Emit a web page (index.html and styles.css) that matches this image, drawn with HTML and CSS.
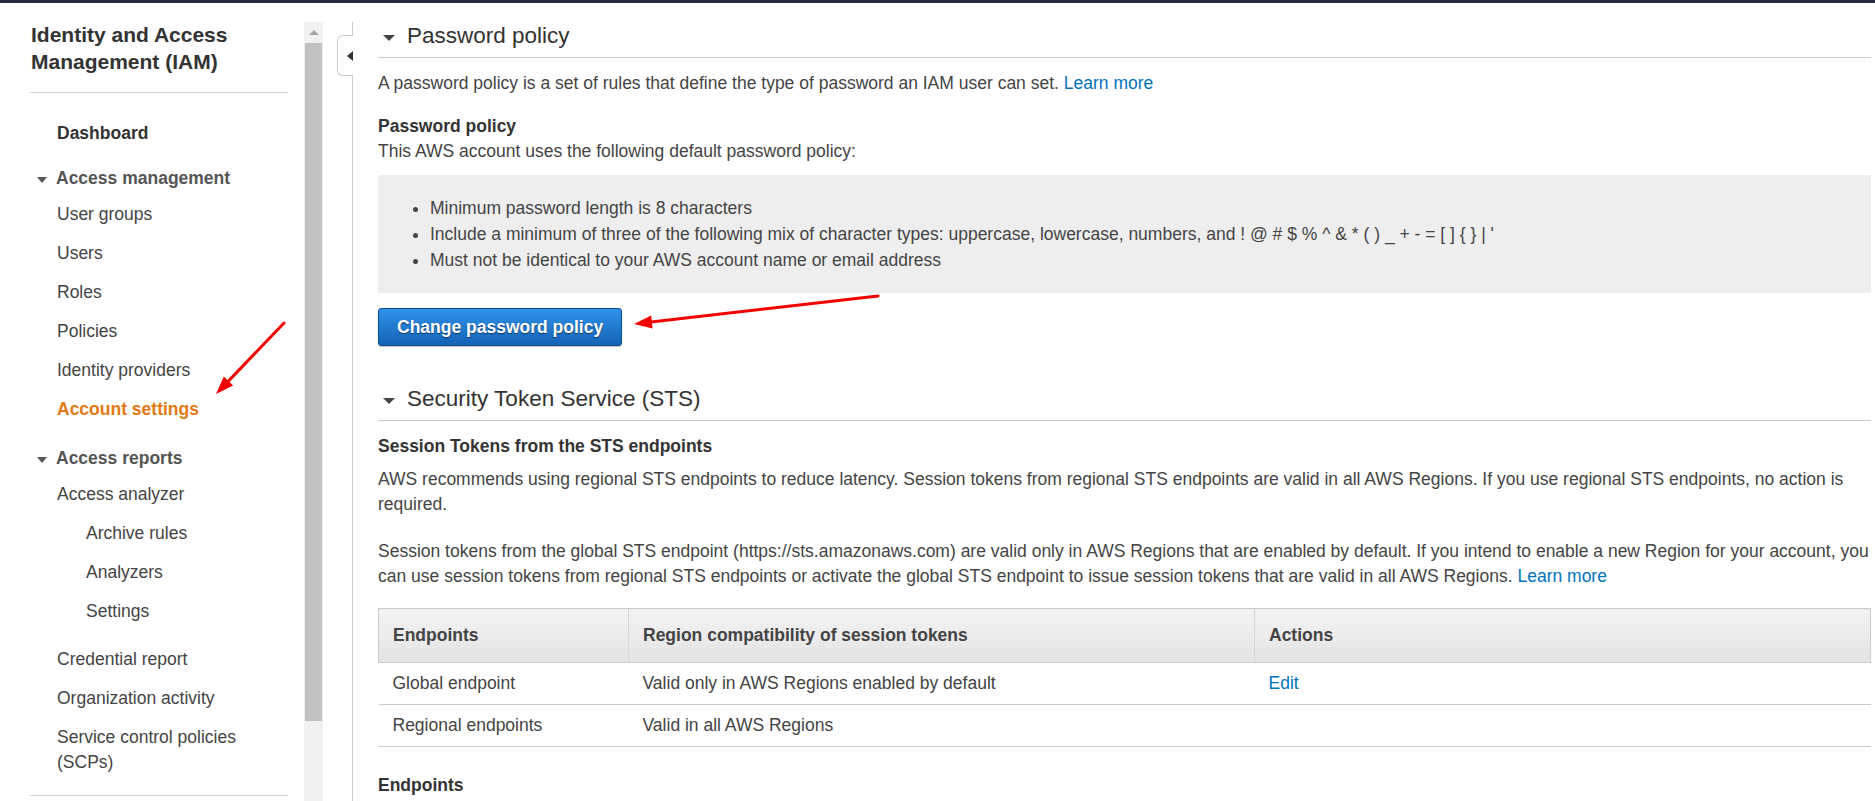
FILE: index.html
```html
<!DOCTYPE html>
<html lang="en">
<head>
<meta charset="utf-8">
<title>IAM - Account settings</title>
<link rel="stylesheet" href="styles.css">
</head>
<body>
<div class="topbar"></div>
<div class="layout">
  <aside class="sidebar">
    <nav class="nav">
      <h1 class="nav-title">Identity and Access Management (IAM)</h1>
      <div class="nav-divider"></div>
      <a class="nav-item nav-strong">Dashboard</a>
      <div class="nav-section">
        <div class="nav-heading"><span class="nav-caret"></span>Access management</div>
        <ul class="nav-list">
          <li class="nav-item">User groups</li>
          <li class="nav-item">Users</li>
          <li class="nav-item">Roles</li>
          <li class="nav-item">Policies</li>
          <li class="nav-item">Identity providers</li>
          <li class="nav-item nav-active">Account settings</li>
        </ul>
      </div>
      <div class="nav-section">
        <div class="nav-heading"><span class="nav-caret"></span>Access reports</div>
        <ul class="nav-list">
          <li class="nav-item">Access analyzer</li>
        </ul>
        <ul class="nav-list nav-sub">
          <li class="nav-item">Archive rules</li>
          <li class="nav-item">Analyzers</li>
          <li class="nav-item">Settings</li>
        </ul>
        <ul class="nav-list">
          <li class="nav-item">Credential report</li>
          <li class="nav-item">Organization activity</li>
          <li class="nav-item">Service control policies (SCPs)</li>
        </ul>
      </div>
      <div class="nav-divider nav-divider-bottom"></div>
    </nav>
    <div class="scrollbar">
      <div class="sb-up"><span class="sb-arrow"></span></div>
      <div class="sb-thumb"></div>
    </div>
  </aside>

  <main class="main">
    <div class="collapse-tab"><span class="collapse-arrow"></span></div>

    <section class="panel">
      <h2 class="panel-title"><span class="panel-caret"></span>Password policy</h2>
      <p class="intro">A password policy is a set of rules that define the type of password an IAM user can set. <a class="link">Learn more</a></p>
      <h3 class="sub-title">Password policy</h3>
      <p class="text">This AWS account uses the following default password policy:</p>
      <div class="policy-box">
        <ul class="policy-list">
          <li>Minimum password length is 8 characters</li>
          <li>Include a minimum of three of the following mix of character types: uppercase, lowercase, numbers, and ! @ # $ % ^ &amp; * ( ) _ + - = [ ] { } | '</li>
          <li>Must not be identical to your AWS account name or email address</li>
        </ul>
      </div>
      <div class="actions">
        <button class="btn-primary">Change password policy</button>
      </div>
    </section>

    <section class="panel panel-sts">
      <h2 class="panel-title"><span class="panel-caret"></span>Security Token Service (STS)</h2>
      <h3 class="sub-title sts-sub">Session Tokens from the STS endpoints</h3>
      <p class="text p-first">AWS recommends using regional STS endpoints to reduce latency. Session tokens from regional STS endpoints are valid in all AWS Regions. If you use regional STS endpoints, no action is required.</p>
      <p class="text p-second">Session tokens from the global STS endpoint (https://sts.amazonaws.com) are valid only in AWS Regions that are enabled by default. If you intend to enable a new Region for your account, you can use session tokens from regional STS endpoints or activate the global STS endpoint to issue session tokens that are valid in all AWS Regions. <a class="link">Learn more</a></p>
      <table class="sts-table">
        <colgroup>
          <col class="col-1">
          <col class="col-2">
          <col>
        </colgroup>
        <thead>
          <tr><th>Endpoints</th><th>Region compatibility of session tokens</th><th>Actions</th></tr>
        </thead>
        <tbody>
          <tr><td>Global endpoint</td><td>Valid only in AWS Regions enabled by default</td><td><a class="link">Edit</a></td></tr>
          <tr><td>Regional endpoints</td><td>Valid in all AWS Regions</td><td></td></tr>
        </tbody>
      </table>
      <h3 class="sub-title endpoints-title">Endpoints</h3>
    </section>
  </main>
</div>

<svg class="annotations" width="1875" height="801" viewBox="0 0 1875 801" xmlns="http://www.w3.org/2000/svg">
  <line x1="878" y1="296" x2="651" y2="322" stroke="#f20000" stroke-width="3" stroke-linecap="round"/>
  <polygon points="634,324 652.6,328.4 651.2,315.5" fill="#f20000"/>
  <line x1="284" y1="323" x2="228" y2="381.5" stroke="#f20000" stroke-width="3" stroke-linecap="round"/>
  <polygon points="216,394 233.2,385.6 223.8,376.4" fill="#f20000"/>
</svg>
</body>
</html>
```

FILE: styles.css
```css
* { box-sizing: border-box; }

html, body {
  margin: 0;
  padding: 0;
  width: 1875px;
  height: 801px;
  overflow: hidden;
  background: #ffffff;
}

body {
  position: relative;
  font-family: "Liberation Sans", Arial, Helvetica, sans-serif;
  font-size: 17.5px;
  color: #444444;
}

.topbar {
  height: 3px;
  background: #232f3e;
}

.layout {
  display: flex;
  padding-top: 19px;
  height: 798px;
}

/* ---------- Sidebar ---------- */
.sidebar {
  flex: none;
  display: flex;
  width: 323px;
  margin-right: 29px;
  height: 100%;
}

.nav {
  flex: none;
  width: 304px;
  padding: 0 16px 0 30px;
}

.nav-title {
  margin: -1px 0 0 1px;
  font-size: 21px;
  line-height: 27px;
  font-weight: bold;
  color: #333333;
}

.nav-divider {
  height: 1px;
  margin-top: 17px;
  background: #d5d5d5;
}

.nav-divider-bottom {
  margin-top: 9px;
}

.nav-item {
  display: block;
  padding: 7px 0 7px 27px;
  line-height: 25px;
  color: #444444;
  list-style: none;
}

.nav-strong {
  margin-top: 21px;
  font-weight: bold;
  color: #333333;
}

.nav-active {
  font-weight: bold;
  color: #e47911;
}

.nav-section {
  padding-bottom: 4px;
}

.nav-heading {
  display: flex;
  align-items: center;
  padding: 13px 0 4px 0;
  line-height: 25px;
  font-weight: bold;
  color: #555555;
}

.nav-caret {
  flex: none;
  width: 0;
  height: 0;
  margin: 3px 9px 0 7px;
  border-left: 5.5px solid transparent;
  border-right: 5.5px solid transparent;
  border-top: 6px solid #555555;
}

.nav-list {
  margin: 0;
  padding: 0;
}

.nav-sub {
  margin-bottom: 9px;
}

.nav-sub .nav-item {
  padding-left: 56px;
}

.scrollbar {
  flex: none;
  width: 19px;
  height: 100%;
  background: #f1f1f1;
  display: flex;
  flex-direction: column;
}

.sb-up {
  height: 21px;
  display: flex;
  align-items: center;
  justify-content: center;
}

.sb-arrow {
  width: 0;
  height: 0;
  border-left: 5px solid transparent;
  border-right: 5px solid transparent;
  border-bottom: 5px solid #a3a3a3;
}

.sb-thumb {
  height: 678px;
  margin: 0 1px;
  background: #c1c1c1;
}

/* ---------- Main ---------- */
.main {
  position: relative;
  flex: 1;
  border-left: 1px solid #cccccc;
  padding: 0 4px 0 25px;
}

.collapse-tab {
  position: absolute;
  left: -16px;
  top: 13px;
  width: 16px;
  height: 41px;
  background: #ffffff;
  border: 1px solid #cccccc;
  border-right: none;
  border-radius: 6px 0 0 6px;
  display: flex;
  align-items: center;
  justify-content: flex-end;
}

.collapse-arrow {
  width: 0;
  height: 0;
  border-top: 5.5px solid transparent;
  border-bottom: 5.5px solid transparent;
  border-right: 6px solid #333333;
}

.panel-title {
  display: flex;
  align-items: center;
  margin: 0;
  padding-bottom: 7px;
  border-bottom: 1px solid #cccccc;
  font-size: 22.5px;
  line-height: 28px;
  font-weight: normal;
  color: #333333;
}

.panel-caret {
  flex: none;
  width: 0;
  height: 0;
  margin: 4px 12px 0 5px;
  border-left: 6px solid transparent;
  border-right: 6px solid transparent;
  border-top: 6px solid #444444;
}

.panel-sts {
  margin-top: 39px;
}

.intro {
  margin: 13px 0 0;
  line-height: 25px;
}

.link {
  color: #0073bb;
  text-decoration: none;
}

.sub-title {
  margin: 18px 0 0;
  font-size: 17.5px;
  line-height: 25px;
  font-weight: bold;
  color: #333333;
}

.sts-sub {
  margin-top: 13px;
}

.text {
  margin: 0;
  line-height: 25px;
}

.p-first {
  margin-top: 8px;
}

.p-second {
  margin-top: 22px;
}

.policy-box {
  margin-top: 11px;
  padding: 20px 0;
  background: #eeeeee;
}

.policy-list {
  margin: 0;
  padding-left: 52px;
  line-height: 26px;
}

.actions {
  margin-top: 15px;
}

.btn-primary {
  height: 38px;
  padding: 0 18px;
  border: 1px solid #0d4f8f;
  border-radius: 3px;
  background: linear-gradient(#3093ea, #1463b6);
  color: #ffffff;
  font-family: "Liberation Sans", Arial, Helvetica, sans-serif;
  font-size: 17.5px;
  font-weight: bold;
  text-shadow: 0 1px 1px rgba(0, 0, 0, 0.55);
  box-shadow: 0 1px 1px rgba(0, 0, 0, 0.25);
}

.sts-table {
  width: 100%;
  margin-top: 19px;
  border-collapse: collapse;
  table-layout: fixed;
}

.col-1 { width: 250px; }
.col-2 { width: 626px; }

.sts-table th {
  height: 54px;
  padding: 0 14px;
  text-align: left;
  font-weight: bold;
  color: #444444;
  background: linear-gradient(#f3f3f3, #e3e3e3);
  border-top: 1px solid #cccccc;
  border-bottom: 1px solid #cccccc;
}

.sts-table th:first-child { border-left: 1px solid #cccccc; }
.sts-table th:last-child { border-right: 1px solid #cccccc; }
.sts-table th + th { border-left: 1px solid #d6d6d6; }

.sts-table td {
  height: 42px;
  padding: 0 14px;
  border-bottom: 1px solid #cccccc;
  color: #444444;
}

.endpoints-title {
  margin-top: 26px;
}

.annotations {
  position: absolute;
  left: 0;
  top: 0;
  pointer-events: none;
}
```
